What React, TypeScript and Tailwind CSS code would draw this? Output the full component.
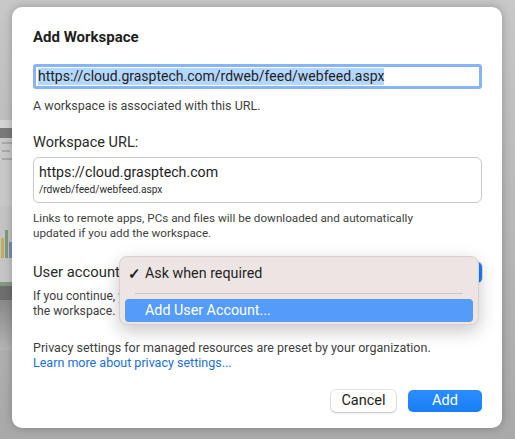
import React from "react";

const font = { fontFamily: "Roboto, 'Noto Sans', sans-serif" };

// ─── Background window peeking out on the left ─────────
function BackdropWindow() {
  return (
    <div className="absolute left-0 top-[120px] flex h-[230px] w-[14px] flex-col">
      <div className="h-[8px] bg-[#d4d4d4]" />
      <div className="h-[10px] bg-[#7a7a7a]" />
      <div className="flex h-[68px] flex-col gap-[6px] bg-[#c9c9c9] px-[2px] pt-[4px]">
        <div className="h-[2px] w-[10px] bg-[#a9a9a9]" />
        <div className="h-[2px] w-[8px] bg-[#a9a9a9]" />
        <div className="h-[2px] w-[10px] bg-[#a9a9a9]" />
      </div>
      <div className="flex h-[56px] items-end gap-[1px] bg-[#c4c4c4] px-[1px] pb-[4px]">
        <div className="h-[20px] w-[3px] bg-[#c2ad5e]" />
        <div className="h-[28px] w-[3px] bg-[#7f9a7b]" />
        <div className="h-[16px] w-[3px] bg-[#7d8fb0]" />
      </div>
      <div className="h-[20px] bg-[#c6c6c6]" />
      <div className="h-[4px] bg-[#7f9c80]" />
      <div className="h-[14px] bg-[#6f6f6f]" />
      <div className="h-[50px] bg-gradient-to-b from-[#8a8a8a] to-[#b4b4b4]" />
    </div>
  );
}

function PopupMenu() {
  return (
    <div className="absolute left-[107px] top-[249px] flex h-[69px] w-[360px] flex-col rounded-[8px] border border-[#d8d0ce] bg-[#ede5e3] px-[5px] pt-[6px] shadow-[0_6px_18px_rgba(0,0,0,0.22)]">
      <div className="flex h-[22px] items-center text-[14.3px] text-[#1f1f1f]">
        <span className="w-[20px] pl-[3px] text-[15px] font-bold">✓</span>
        <span>Ask when required</span>
      </div>
      <div className="mx-[10px] mt-[8px] h-px bg-[#cfc7c5]" />
      <div className="mt-[5px] flex h-[23px] items-center rounded-[4px] bg-[#549cf8] pl-[20px] text-[14.3px] text-white">
        Add User Account...
      </div>
    </div>
  );
}

export default function App() {
  return (
    <div
      className="relative h-[439px] w-[515px] overflow-hidden bg-gradient-to-b from-[#c8c8c8] to-[#a9a9a9]"
      style={font}
    >
      <BackdropWindow />

      <div className="absolute left-[12px] top-[7px] flex h-[421px] w-[490px] flex-col rounded-[10px] bg-white pl-[21px] pr-[20px] pt-[21px] shadow-[0_0_10px_rgba(0,0,0,0.25)]">
        <h1 className="text-[15px] font-bold leading-[18px] text-[#1e1e1e]">Add Workspace</h1>

        <div className="mt-[18px] flex h-[25px] items-center rounded-[3px] border-[3px] border-[#87b4f6] bg-white pl-[2px]">
          <span className="bg-[#b3d7ff] text-[14px] leading-[17px] text-[#1e1e1e]">
            https://cloud.grasptech.com/rdweb/feed/webfeed.aspx
          </span>
        </div>

        <p className="mt-[9px] text-[12.5px] leading-[16px] text-[#3f3f3f]">
          A workspace is associated with this URL.
        </p>

        <p className="mt-[19px] text-[14.5px] leading-[20px] text-[#2a2a2a]">Workspace URL:</p>

        <div className="mt-[4px] flex h-[46px] flex-col justify-center rounded-[6px] border border-[#c9c9c9] pl-[5px]">
          <span className="text-[14.2px] leading-[19px] text-[#1e1e1e]">https://cloud.grasptech.com</span>
          <span className="text-[10.2px] leading-[15px] text-[#2e2e2e]">/rdweb/feed/webfeed.aspx</span>
        </div>

        <p className="mt-[8px] text-[11.7px] leading-[15px] text-[#3f3f3f]">
          Links to remote apps, PCs and files will be downloaded and automatically
          <br />
          updated if you add the workspace.
        </p>

        <div className="mt-[21px] flex h-[21px] items-center justify-between">
          <span className="text-[14.8px] text-[#2a2a2a]">User account:</span>
          <div className="flex h-[21px] w-[200px] items-center justify-between rounded-[5px] bg-white pl-[8px] shadow-[0_0_0_1px_rgba(0,0,0,0.12)]">
            <span className="text-[13px]">Ask when required</span>
            <div className="h-[21px] w-[17px] rounded-r-[5px] bg-[#1b7ff6]" />
          </div>
        </div>

        <p className="mt-[6px] text-[12.2px] leading-[15px] text-[#3f3f3f]">
          If you continue, you will be asked for credentials when you connect to
          <br />
          the workspace.
        </p>

        <p className="mt-[21px] text-[12.5px] leading-[15px] text-[#3f3f3f]">
          Privacy settings for managed resources are preset by your organization.
          <br />
          <span className="text-[#1a6fd9]">Learn more about privacy settings...</span>
        </p>

        <div className="mt-[20px] flex justify-end gap-[12px]">
          <button className="h-[22px] w-[65px] rounded-[5px] bg-white text-[14.5px] text-[#1e1e1e] shadow-[0_0_0_1px_rgba(0,0,0,0.1),0_1px_2px_rgba(0,0,0,0.15)]">
            Cancel
          </button>
          <button className="h-[22px] w-[74px] rounded-[5px] bg-gradient-to-b from-[#2a8dff] to-[#1a7ef5] text-[14.5px] text-white">
            Add
          </button>
        </div>

        <PopupMenu />
      </div>
    </div>
  );
}
